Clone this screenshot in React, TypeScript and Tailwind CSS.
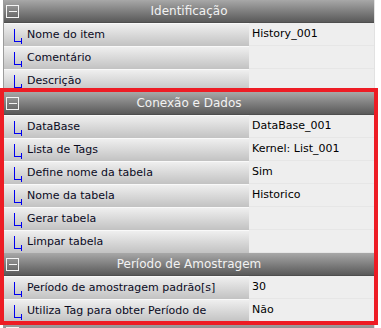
const font = { fontFamily: '"DejaVu Sans", Verdana, sans-serif' }

type Item = { label: string; value?: string }

const sections: { title: string; items: Item[] }[] = [
  {
    title: 'Identificação',
    items: [
      { label: 'Nome do item', value: 'History_001' },
      { label: 'Comentário' },
      { label: 'Descrição' },
    ],
  },
  {
    title: 'Conexão e Dados',
    items: [
      { label: 'DataBase', value: 'DataBase_001' },
      { label: 'Lista de Tags', value: 'Kernel: List_001' },
      { label: 'Define nome da tabela', value: 'Sim' },
      { label: 'Nome da tabela', value: 'Historico' },
      { label: 'Gerar tabela' },
      { label: 'Limpar tabela' },
    ],
  },
  {
    title: 'Período de Amostragem',
    items: [
      { label: 'Período de amostragem padrão[s]', value: '30' },
      { label: 'Utiliza Tag para obter Período de', value: 'Não' },
    ],
  },
  // next group, only its top edge is on screen
  { title: '', items: [] },
]

const TreeLine = () => (
  <svg width="16" height="22" viewBox="0 0 16 22" className="shrink-0" shapeRendering="crispEdges">
    <path d="M1.5 5 V17.5 H8.5" fill="none" stroke="#0000f0" strokeWidth="1" />
    <path d="M8.5 14 V20" fill="none" stroke="#0000f0" strokeWidth="1" />
  </svg>
)

const CollapseBox = () => (
  <svg width="13" height="13" viewBox="0 0 13 13" shapeRendering="crispEdges">
    <rect x="0.5" y="0.5" width="12" height="12" fill="none" stroke="#f4f4f4" />
    <path d="M2.5 6.5 H10.5" stroke="#f4f4f4" />
  </svg>
)

const SectionHeader = ({ title }: { title: string }) => (
  <div className="grid h-[23px] grid-cols-[20px_1fr_20px] items-center border-b border-[#4e4e4e] bg-linear-to-b from-[#a8a8a8] to-[#5a5a5a]">
    <div className="flex pl-[2px]">
      <CollapseBox />
    </div>
    <div className="text-center text-[12px] text-[#f2f2f2]">{title}</div>
    <div />
  </div>
)

const Row = ({ label, value }: Item) => (
  <div className="flex h-[23px]">
    <div className="flex w-[245px] items-center border-t border-[#f9f9f9] bg-linear-to-b from-[#efefef] to-[#c2c2c2] pl-[9px] text-[11px] text-[#0a0a1e]">
      <TreeLine />
      <span className="ml-[-2px] whitespace-nowrap">{label}</span>
    </div>
    <div className="flex flex-1 items-center border-b border-[#e6e6e6] bg-[#eeeeee] pl-[3px] text-[11px] text-black">
      {value}
    </div>
  </div>
)

export default function App() {
  return (
    <div className="relative h-[328px] w-[381px] overflow-hidden bg-white" style={font}>
      <div className="ml-[3px] w-[372px] border-l border-r border-[#9c9c9c] border-r-[#e2e2e2]">
        {sections.map((s, i) => (
          <div key={i}>
            <SectionHeader title={s.title} />
            {s.items.map((it) => (
              <Row key={it.label} {...it} />
            ))}
          </div>
        ))}
      </div>
      <div className="pointer-events-none absolute left-0 top-[88px] h-[237px] w-[378px] border-4 border-[#ed1c24]" />
    </div>
  )
}
